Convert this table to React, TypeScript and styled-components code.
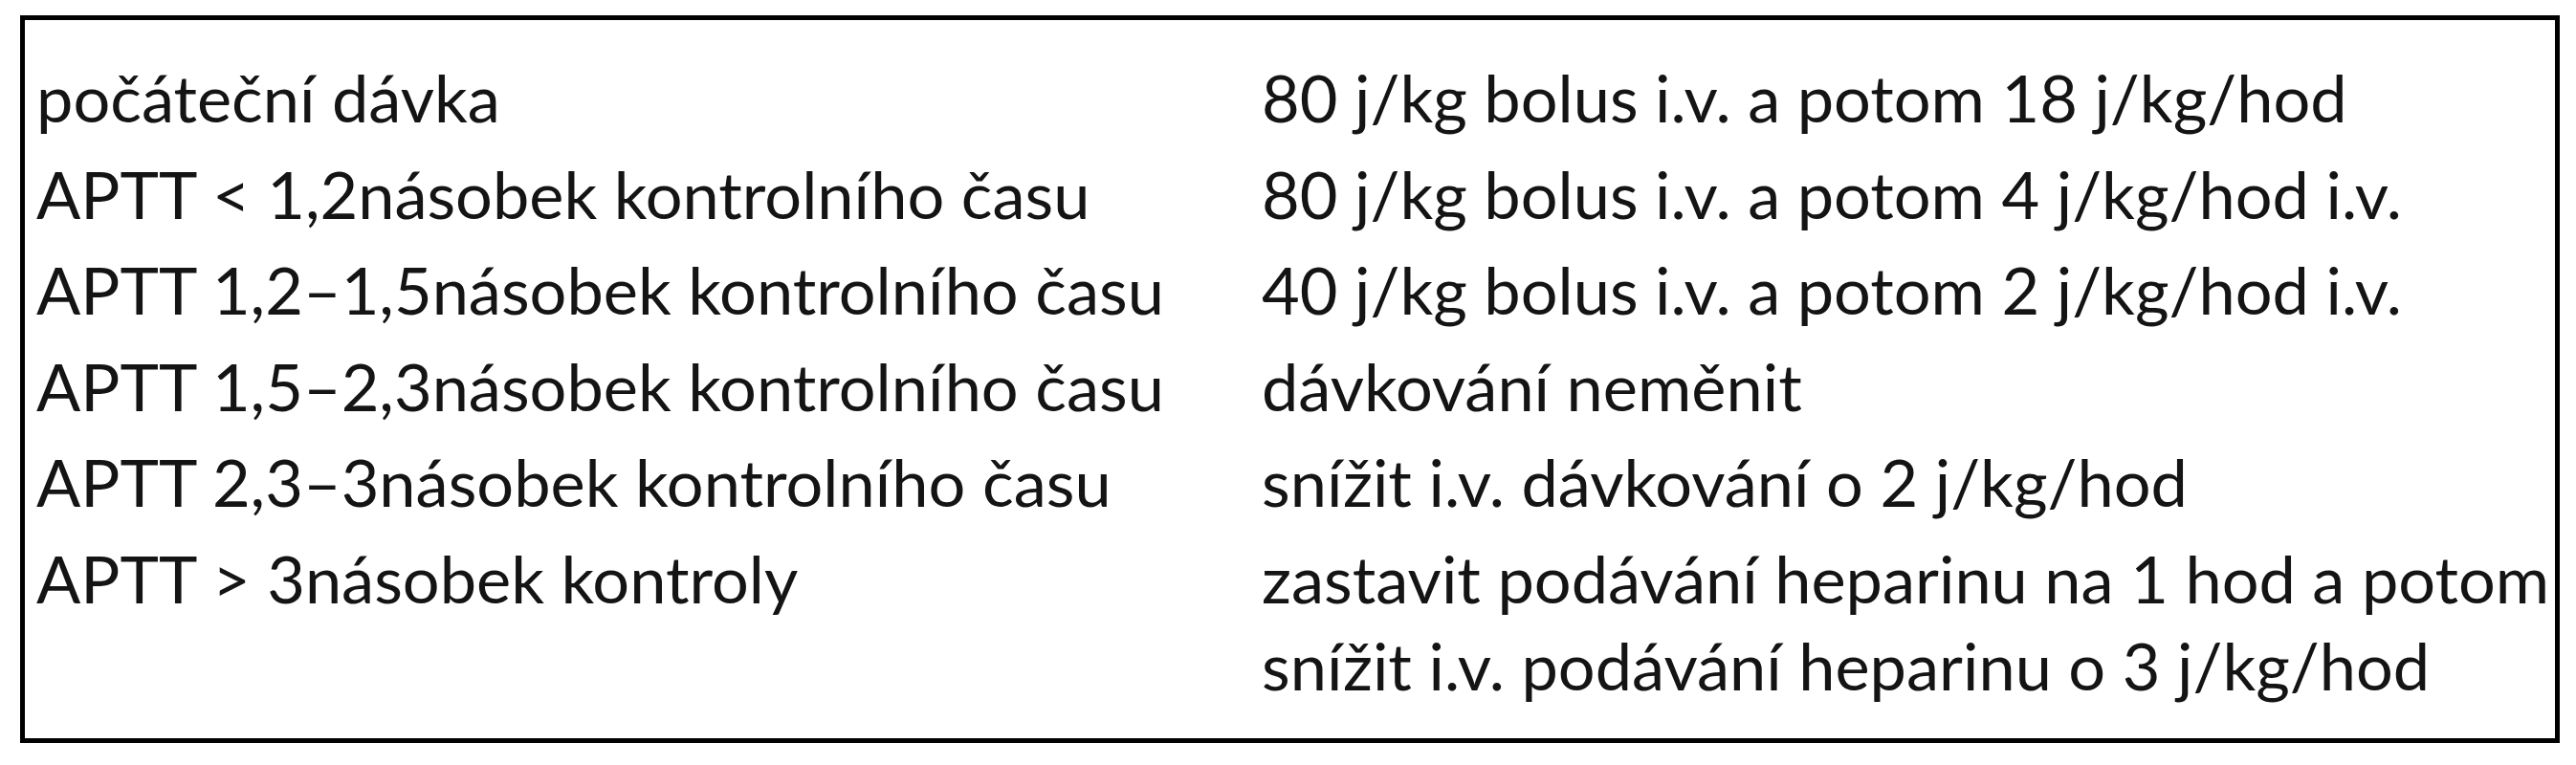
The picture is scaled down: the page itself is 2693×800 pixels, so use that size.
import React from "react";
import styled, { createGlobalStyle } from "styled-components";

const Global = createGlobalStyle`
  html, body { margin: 0; padding: 0; background: #fff; }
`;

const Page = styled.div`
  padding: 16px 17px 23px 21px;
  background: #fff;
`;

const Frame = styled.div`
  border: 5px solid #000;
  padding: 35px 12px 31.5px 12px;
`;

const Table = styled.div`
  display: grid;
  grid-template-columns: 1281px 1fr;
  row-gap: 9.5px;
  font-family: "Lato", "Noto Sans", sans-serif;
  font-size: 68.5px;
  line-height: 91px;
  color: #141414;
`;

const Cell = styled.div`
  white-space: nowrap;
`;

const Line = styled.div``;

const rows: [string, string[]][] = [
  ["počáteční dávka", ["80 j/kg bolus i.v. a potom 18 j/kg/hod"]],
  ["APTT < 1,2násobek kontrolního času", ["80 j/kg bolus i.v. a potom 4 j/kg/hod i.v."]],
  ["APTT 1,2–1,5násobek kontrolního času", ["40 j/kg bolus i.v. a potom 2 j/kg/hod i.v."]],
  ["APTT 1,5–2,3násobek kontrolního času", ["dávkování neměnit"]],
  ["APTT 2,3–3násobek kontrolního času", ["snížit i.v. dávkování o 2 j/kg/hod"]],
  [
    "APTT > 3násobek kontroly",
    ["zastavit podávání heparinu na 1 hod a potom", "snížit i.v. podávání heparinu o 3 j/kg/hod"],
  ],
];

export default function App() {
  return (
    <>
      <Global />
      <Page>
        <Frame>
          <Table>
            {rows.map(([left, right], i) => (
              <React.Fragment key={i}>
                <Cell>{left}</Cell>
                <Cell>
                  {right.map((line, j) => (
                    <Line key={j}>{line}</Line>
                  ))}
                </Cell>
              </React.Fragment>
            ))}
          </Table>
        </Frame>
      </Page>
    </>
  );
}
